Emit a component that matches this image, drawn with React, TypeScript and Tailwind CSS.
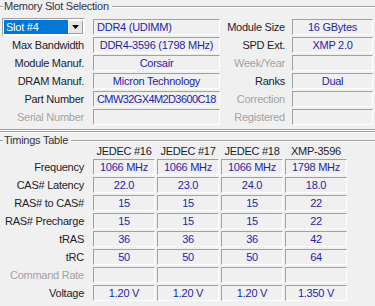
import React from "react";

const LBL = "text-[#22222e]";
const DIS = "text-[#a3a3a3]";
const VAL = "text-[#1f1fa8]";

function GroupTitle({ title, h }: { title: string; h: string }) {
  return (
    <div className={`flex items-center ${h}`}>
      <div className="w-[3px] h-[2px] border-t border-[#a0a0a0] bg-white" />
      <span className="px-[1px] text-[#353548] whitespace-nowrap">{title}</span>
      <div className="flex-1 ml-[2px] h-[2px] border-t border-[#a0a0a0] bg-white" />
    </div>
  );
}

function Field({
  children,
  w,
  left = false,
}: {
  children?: React.ReactNode;
  w: string;
  left?: boolean;
}) {
  return (
    <div
      className={`${w} h-[16px] shrink-0 border-t border-l border-t-[#a0a0a0] border-l-[#a0a0a0] border-b border-r border-b-white border-r-white flex items-center whitespace-nowrap overflow-hidden ${VAL} ${
        left ? "justify-start pl-[3px]" : "justify-center"
      }`}
    >
      {children}
    </div>
  );
}

function InfoRow({
  label,
  labelDisabled,
  value,
  left,
  rlabel,
  rdisabled,
  rvalue,
}: {
  label: string;
  labelDisabled?: boolean;
  value?: React.ReactNode;
  left?: boolean;
  rlabel: string;
  rdisabled?: boolean;
  rvalue?: string;
}) {
  return (
    <div className="flex items-center h-[16px]">
      <div className={`w-[84px] text-right whitespace-nowrap ${labelDisabled ? DIS : LBL}`}>{label}</div>
      <div className="w-[9px]" />
      <Field w="w-[127px]" left={left}>
        {value}
      </Field>
      <div className={`w-[65px] text-right whitespace-nowrap ${rdisabled ? DIS : LBL}`}>{rlabel}</div>
      <div className="w-[7px]" />
      <Field w="w-[81px]">{rvalue}</Field>
    </div>
  );
}

function TimingRow({
  label,
  disabled,
  values,
}: {
  label: string;
  disabled?: boolean;
  values: string[];
}) {
  return (
    <div className="flex items-center h-[16px]">
      <div className={`w-[84px] text-right whitespace-nowrap ${disabled ? DIS : LBL}`}>{label}</div>
      <div className="w-[9px]" />
      <div className="grid grid-cols-[62px_62px_62px_62px] gap-x-[2px]">
        {values.map((v, i) => (
          <Field key={i} w="w-[62px]">
            {v}
          </Field>
        ))}
      </div>
    </div>
  );
}

export default function App() {
  return (
    <div className="w-[375px] h-[306px] overflow-hidden bg-[#f0f0f0] font-['Liberation_Sans',Arial,sans-serif] text-[11px] tracking-[-0.25px] leading-none select-none">
      {/* Memory Slot Selection */}
      <div>
        <GroupTitle title="Memory Slot Selection" h="h-[13px]" />
        <div className="mt-[6px] flex flex-col gap-[2px]">
          {/* Row 1 */}
          <div className="flex items-center h-[16px]">
            <div className="ml-[2px] w-[83px] h-[18px] border-t border-l border-t-[#a0a0a0] border-l-[#a0a0a0] border-b border-r border-b-white border-r-white bg-white p-[1px] flex">
              <div className="flex-1 bg-[#0078d7] text-white flex items-center pl-[2px]">Slot #4</div>
              <div className="w-[15px] bg-[#e6e6e6] border-t border-l border-white border-b border-r border-b-[#a0a0a0] border-r-[#a0a0a0] flex items-center justify-center">
                <svg width="7" height="4" viewBox="0 0 7 4">
                  <path d="M0 0H7L3.5 4Z" fill="#000" />
                </svg>
              </div>
            </div>
            <div className="w-[8px]" />
            <Field w="w-[127px]" left>
              DDR4 (UDIMM)
            </Field>
            <div className={`w-[65px] text-right whitespace-nowrap ${LBL}`}>Module Size</div>
            <div className="w-[7px]" />
            <Field w="w-[81px]">16 GBytes</Field>
          </div>
          <InfoRow label="Max Bandwidth" value="DDR4-3596 (1798 MHz)" rlabel="SPD Ext." rvalue="XMP 2.0" />
          <InfoRow label="Module Manuf." value="Corsair" rlabel="Week/Year" rdisabled />
          <InfoRow label="DRAM Manuf." value="Micron Technology" rlabel="Ranks" rvalue="Dual" />
          <InfoRow
            label="Part Number"
            value={<span className="tracking-[-0.6px]">CMW32GX4M2D3600C18</span>}
            left
            rlabel="Correction"
            rdisabled
          />
          <InfoRow label="Serial Number" labelDisabled rlabel="Registered" rdisabled />
        </div>
        <div className="mt-[4px] h-[2px] border-t border-[#a0a0a0] bg-white" />
        <div className="h-[2px] border-t border-[#a0a0a0] bg-white" />
      </div>

      {/* Timings Table */}
      <div className="mt-[2px]">
        <GroupTitle title="Timings Table" h="h-[11px]" />
        <div className="flex items-center h-[10px]">
          <div className="w-[93px]" />
          <div className={`grid grid-cols-[62px_62px_62px_62px] gap-x-[2px] ${LBL}`}>
            <div className="text-center">JEDEC #16</div>
            <div className="text-center">JEDEC #17</div>
            <div className="text-center">JEDEC #18</div>
            <div className="text-center">XMP-3596</div>
          </div>
        </div>
        <div className="mt-[3px] flex flex-col gap-[2px]">
          <TimingRow label="Frequency" values={["1066 MHz", "1066 MHz", "1066 MHz", "1798 MHz"]} />
          <TimingRow label="CAS# Latency" values={["22.0", "23.0", "24.0", "18.0"]} />
          <TimingRow label="RAS# to CAS#" values={["15", "15", "15", "22"]} />
          <TimingRow label="RAS# Precharge" values={["15", "15", "15", "22"]} />
          <TimingRow label="tRAS" values={["36", "36", "36", "42"]} />
          <TimingRow label="tRC" values={["50", "50", "50", "64"]} />
          <TimingRow label="Command Rate" disabled values={["", "", "", ""]} />
          <TimingRow label="Voltage" values={["1.20 V", "1.20 V", "1.20 V", "1.350 V"]} />
        </div>
      </div>
    </div>
  );
}
